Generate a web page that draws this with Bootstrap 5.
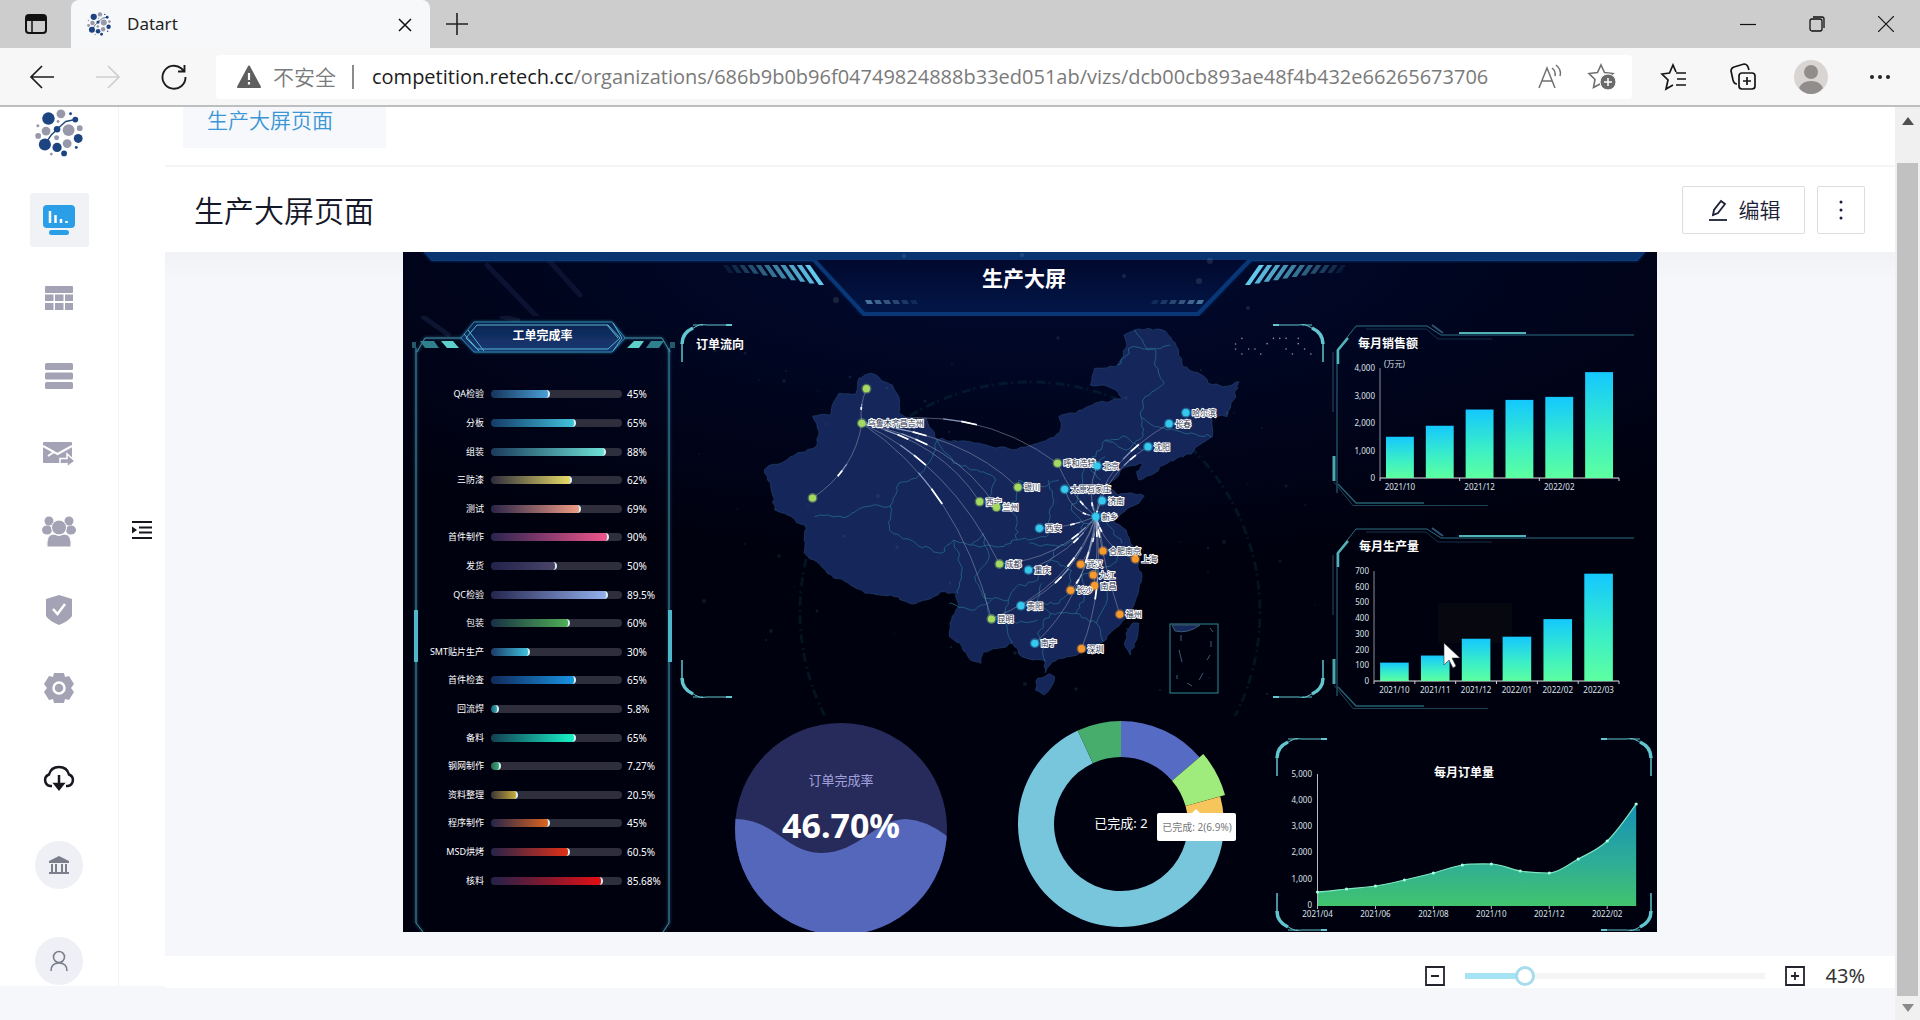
<!DOCTYPE html>
<html lang="zh-CN">
<head>
<meta charset="utf-8">
<meta name="viewport" content="width=device-width, initial-scale=1">
<title>Datart</title>
<link rel="stylesheet" href="https://cdn.jsdelivr.net/npm/bootstrap@5.3.0/dist/css/bootstrap.min.css">
<style>
  :root { --ui: "Noto Sans", "Noto Sans CJK SC", sans-serif; --ink: #1b2036; --muted-icon: #a3a3b5; --soft: #f5f7fb; }
  body { font-family: var(--ui); color: var(--ink); background: var(--soft); min-height: 100vh; overflow: hidden; }
  button { color: inherit; }
  svg { display: block; }
  .plain { border: 0; background: none; padding: 0; display: flex; align-items: center; justify-content: center; }

  /* browser chrome */
  .tab-strip { background: #cdcdcd; height: 48px; }
  .tab-menu { width: 71px; }
  .page-tab { width: 359px; background: #f7f8f9; border-radius: 8px 8px 0 0; font-size: 17px; line-height: 48px; padding: 0 14px 0 16px; color: #222; }
  .new-tab { width: 54px; }
  .win-btn { width: 69px; }
  .tool-strip { background: #f7f7f8; height: 59px; border-bottom: 2px solid #bdbebf; }
  .nav-group { width: 216px; padding: 0 29px; }
  .address { height: 44px; background: #fff; border-radius: 4px; font-size: 20px; line-height: 44px; color: #7a7a7a; padding: 0 15px 0 21px; min-width: 0; }
  .address .host { color: #1c1c1c; }
  .address .url { white-space: nowrap; overflow: hidden; flex: 1 1 auto; padding-left: 18px; font-family: "Open Sans", "Noto Sans", sans-serif; }
  .address .unsafe { font-size: 21px; font-weight: 350; padding: 0 16px 0 12px; border: 0; white-space: nowrap; }
  .address .rule { width: 2px; height: 24px; background: #8b8b8b; }
  .tools-right { width: 288px; padding: 0 6px 0 8px; }
  .tools-right .plain { flex: 1 1 0; }

  /* app shell */
  .side { width: 119px; background: #fff; border-right: 1px solid #f3f4f6; padding-top: 2px; }
  .side nav { gap: 24px; margin-top: 36px; }
  .side nav a { width: 59px; height: 54px; display: flex; align-items: center; justify-content: center; color: var(--muted-icon); border-radius: 3px; }
  .side nav a.active { background: #f0f2f6; color: #2a9ee6; }
  .side-btn { width: 48px; height: 48px; margin-top: 39px; }
  .round-btn { background: #eef0f5; border-radius: 50%; color: #7d7e8c; }
  .rail { width: 46px; background: #fff; padding-bottom: 34px; }
  .shell-left { height: 879px; }
  .doc-tabs { background: #fff; height: 60px; border-bottom: 2px solid #f4f5f7; padding-left: 18px; }
  .doc-tab { background: #f6f8fb; color: #3b96d6; height: 41px; width: 203px; padding: 0 24px; font-size: 21px; line-height: 27px; text-decoration: none; font-weight: 350; }
  .doc-head { background: #fff; height: 85px; padding: 0 30px 0 29px; }
  .doc-head h1 { font-size: 30px; line-height: 40px; margin: 0; padding-top: 2px; font-weight: 350; color: #151828; }
  .doc-head .btn { border: 1px solid #dcdde1; border-radius: 2px; background: #fff; height: 48px; font-size: 21px; line-height: 30px; color: #1b2036; font-weight: 350; }
  .edit-btn { width: 123px; }
  .more-btn { width: 48px; }
  .stage { background: linear-gradient(#f1f2f6, #f5f7fb 30px); padding-bottom: 24px; }
  .zoom-bar { background: #fff; height: 32px; padding: 8px 30px 0; font-size: 20px; line-height: 24px; }
  .zoom-bar label { width: 42px; color: #333; text-align: right; margin-left: 18px; }
  .zoom-range { appearance: none; -webkit-appearance: none; width: 300px; height: 20px; margin: 0 20px; background: linear-gradient(90deg, #a5e3f5 20%, #f4f5f5 20%) center / 100% 6px no-repeat; }
  .zoom-range::-webkit-slider-thumb { -webkit-appearance: none; width: 20px; height: 20px; border-radius: 50%; background: #fff; border: 3px solid #a5dcee; }
  .page-scroll { width: 25px; background: #f0f0f0; }
  .page-scroll .thumb { width: 21px; background: #c1c1c1; margin-bottom: 0; }
  .scroll-up { height: 56px; padding-top: 10px; }
  .scroll-down { height: 24px; }

  /* production board */
  .board { width: 100%; max-width: 1254px; background: #00000c radial-gradient(ellipse 75% 45% at 50% 0, #010a30, #00010f 100%) no-repeat; color: #fff; overflow: hidden; }
  .board svg { width: 100%; height: auto; }
  .board text { font-family: var(--ui); }
  .board-body { display: grid; grid-template-columns: 277fr 977fr; }
  .board-top { display: grid; grid-template-columns: 652fr 325fr; }
  .board-low { display: grid; grid-template-columns: 320fr 260fr 397fr; }
  .rate-panel { position: relative; padding: 0 21px 0 23px; }
  .rate-panel > svg { position: absolute; inset: 0; height: 100%; }
  .rate-panel h2 { position: relative; font-size: 12px; line-height: 40px; font-weight: 700; text-align: center; margin: 0 0 24px; }
  .rate-list { position: relative; height: 515px; font-size: 9px; line-height: 12px; margin: 0; }
  .rate-list .name { width: 58px; text-align: right; white-space: nowrap; margin-right: 7px; }
  .rate-list .progress { flex: 1 1 auto; height: 8px; border-radius: 4px; background: #2e2e3c; }
  .rate-list .progress-bar { border-radius: 4px; border-right: 2px solid #d5f3f5; }
  .rate-list .pct { width: 32px; font-size: 10px; margin-left: 5px; white-space: nowrap; }
  .t-head { font-size: 12px; font-weight: 700; fill: #fff; }
  .t-axis { font-size: 8px; fill: #dfe3ea; }
  .t-city { font-size: 8px; fill: #28304c; stroke: #fff; stroke-width: 2px; paint-order: stroke; stroke-linejoin: round; }
  .end { text-anchor: end; }
  .mid { text-anchor: middle; }
</style>
<script src="https://cdn.jsdelivr.net/npm/bootstrap@5.3.0/dist/js/bootstrap.bundle.min.js"></script>
</head>
<body class="d-flex flex-column">

<svg width="0" height="0" class="position-absolute" aria-hidden="true">
  <defs>
    <symbol id="logo" viewBox="33 108 50 50">
      <path d="M43 145 50 135 56 129 65 121 75 119" fill="none" stroke="#24477a" stroke-width="1.5"/>
      <g fill="#1c4480"><circle cx="47" cy="118" r="6.5"/><circle cx="56" cy="129" r="3.4"/><circle cx="75" cy="119" r="3"/><circle cx="78" cy="138.700" r="4.600"/><circle cx="43.300" cy="145" r="6.300"/><circle cx="56" cy="148" r="4.800"/><circle cx="63.300" cy="154.300" r="3"/><circle cx="70" cy="113" r="1.500"/><circle cx="76" cy="148" r="1.500"/></g>
      <g fill="#9798a9"><circle cx="60" cy="113" r="4.600"/><circle cx="44.500" cy="131" r="4.600"/><circle cx="68" cy="130" r="6.200"/><circle cx="79.600" cy="128" r="3"/><circle cx="36.300" cy="136" r="3"/><circle cx="55.500" cy="138" r="2.600"/><circle cx="66.500" cy="144" r="4.600"/><circle cx="36" cy="125.500" r="1.600"/><circle cx="50" cy="155" r="1.500"/><circle cx="57" cy="121" r="1.500"/></g>
    </symbol>
    <linearGradient id="barFill" x1="0" y1="0" x2="0" y2="1"><stop offset="0" stop-color="#14c8ff"/><stop offset=".6" stop-color="#3df0c4"/><stop offset="1" stop-color="#5dffa0"/></linearGradient>
    <linearGradient id="areaFill" x1="0" y1="0" x2="0" y2="1"><stop offset="0" stop-color="#1590b4"/><stop offset=".55" stop-color="#2dac98"/><stop offset="1" stop-color="#42c46e"/></linearGradient>
    <linearGradient id="hexFill" x1="0" y1="0" x2="0" y2="1"><stop offset="0" stop-color="#0e2350"/><stop offset="1" stop-color="#153a75"/></linearGradient>
    <filter id="glow" x="-10%" y="-10%" width="120%" height="120%"><feGaussianBlur stdDeviation="1.500" result="b"/><feMerge><feMergeNode in="b"/><feMergeNode in="SourceGraphic"/></feMerge></filter>
    <g id="angleFrame" fill="none" stroke-linejoin="round">
      <path d="M1337 493V350L1356 326H1427L1441 335H1634" stroke="#2a7183" stroke-width="1"/>
      <path d="M1366 329H1426L1438 339H1492" stroke="#16304a" stroke-width="1"/>
      <path d="M1432 325 1443 333" stroke="#2c5573" stroke-width="2"/>
      <path d="M1338 364V350L1348 338" stroke="#52b3b8" stroke-width="2.500"/>
      <path d="M1459 333H1526" stroke="#4fb3b8" stroke-width="2"/>
      <path d="M1333 352V412" stroke="#34485f" stroke-width="1"/>
      <path d="M1334 456V481" stroke="#4ba9ae" stroke-width="3"/>
      <path d="M1334 482 1353 505.500H1488" stroke="#1e4158" stroke-width="1"/>
      <path d="M1338 484 1356 503H1424" stroke="#23606f" stroke-width="1.500"/>
    </g>
    <g id="cornerMark" fill="none" stroke="#62c5cf">
      <path d="M1 38V18" stroke-width="1.500"/><path d="M1 20Q1 9 12 4" stroke-width="3.500"/>
      <path d="M8 7 14 3Q19-1 26 1H50M12 1h10" stroke-width="1"/>
      <path d="M45 1h6" stroke-width="2"/>
    </g>
  </defs>
</svg>

<header>
  <div class="tab-strip d-flex align-items-stretch">
    <button class="plain tab-menu" aria-label="标签操作菜单"><svg width="22" height="22" viewBox="0 0 22 22"><rect x="1" y="2" width="20" height="18" rx="3" fill="none" stroke="#111" stroke-width="2"/><path d="M1 3h20v5H1z" fill="#111"/><path d="M7 8v12" stroke="#111" stroke-width="1.500"/></svg></button>
    <div class="page-tab d-flex align-items-center">
      <svg width="24" height="24"><use href="#logo"/></svg><span class="ps-3 flex-fill">Datart</span>
      <button class="plain" aria-label="关闭标签"><svg width="22" height="22" viewBox="0 0 22 22"><path d="M5 6 17 18M17 6 5 18" stroke="#111" stroke-width="1.500"/></svg></button>
    </div>
    <button class="plain new-tab" aria-label="新建标签"><svg width="22" height="22" viewBox="0 0 22 22"><path d="M0 11h22M11 0v22" stroke="#222" stroke-width="1.600"/></svg></button>
    <div class="ms-auto d-flex">
      <button class="plain win-btn" aria-label="最小化"><svg width="16" height="16"><path d="M0 8.500h16" stroke="#111" stroke-width="1.200"/></svg></button>
      <button class="plain win-btn" aria-label="还原"><svg width="16" height="16" fill="none" stroke="#111" stroke-width="1.300"><rect x="1" y="3" width="12" height="12" rx="2"/><path d="M4 1h9q2 0 2 2v9"/></svg></button>
      <button class="plain win-btn" aria-label="关闭"><svg width="16" height="16"><path d="M0 0 16 16M16 0 0 16" stroke="#111" stroke-width="1.200"/></svg></button>
    </div>
  </div>
  <div class="tool-strip d-flex align-items-center">
    <div class="nav-group d-flex justify-content-between flex-shrink-0">
      <button class="plain" aria-label="后退"><svg width="26" height="26" viewBox="0 0 26 26" fill="none" stroke="#1d1d1d" stroke-width="1.700"><path d="M25 13H2M13 2 2 13 13 24"/></svg></button>
      <button class="plain" aria-label="前进"><svg width="26" height="26" viewBox="0 0 26 26" fill="none" stroke="#cfcfd2" stroke-width="1.700"><path d="M1 13h23M13 2 24 13 13 24"/></svg></button>
      <button class="plain" aria-label="刷新"><svg width="26" height="26" viewBox="0 0 26 26" fill="none" stroke="#1d1d1d" stroke-width="1.900"><path d="M24.500 13A11.500 11.500 0 1 1 20.500 4.500L23 7M23.500 1v6.500H17"/></svg></button>
    </div>
    <div class="address d-flex align-items-center flex-fill">
      <svg width="24" height="24" viewBox="0 0 24 24"><path d="M12 1.500 23 22H1z" fill="#5f5f5f" stroke="#5f5f5f" stroke-width="2" stroke-linejoin="round"/><path d="M12 8v7M12 17v2.500" stroke="#fff" stroke-width="2.200"/></svg>
      <span class="unsafe">不安全</span><span class="rule"></span>
      <span class="url"><span class="host">competition.retech.cc</span>/organizations/686b9b0b96f04749824888b33ed051ab/vizs/dcb00cb893ae48f4b432e66265673706</span>
      <button class="plain me-4" aria-label="朗读"><svg width="26" height="26" viewBox="0 0 26 26" fill="none" stroke="#707070" stroke-width="1.500"><path d="M2 24 10 4 18 24M5 17h10M15 4q4 3 3 8M19 1q6 5 4 11"/></svg></button>
      <button class="plain" aria-label="收藏"><svg width="30" height="30" viewBox="0 0 30 30"><path d="M14 3l3.500 7.500 8.500 1-6 6 1.500 8-7.500-4-7.500 4 1.500-8-6-6 8.500-1z" fill="none" stroke="#707070" stroke-width="1.600"/><circle cx="21" cy="20" r="8" fill="#6a6a6a" stroke="#fff"/><path d="M21 16v8M17 20h8" stroke="#fff" stroke-width="1.500"/></svg></button>
    </div>
    <div class="tools-right d-flex flex-shrink-0">
      <button class="plain" aria-label="收藏夹"><svg width="28" height="28" viewBox="0 0 28 28" fill="none" stroke="#161616" stroke-width="1.700"><path d="M16 9 13 2 9.500 10 2 11l6 6-2 9 7-4M16 10h10M17 16h9M16 22h10"/></svg></button>
      <button class="plain" aria-label="集锦"><svg width="28" height="28" viewBox="0 0 28 28" fill="none" stroke="#161616" stroke-width="1.700"><rect x="10" y="10" width="16" height="16" rx="3"/><path d="M18 14v8M14 18h8M8 21q-3 0-4-4L2 8q0-3 3-4l10-3q3 0 4 3l1 3"/></svg></button>
      <button class="plain" aria-label="用户"><svg width="34" height="34" viewBox="0 0 34 34"><circle cx="17" cy="17" r="17" fill="#d8d5d3"/><circle cx="17" cy="12" r="7" fill="#918d8c"/><path d="M5 28q3-7 12-7t12 7q-5 6-12 6T5 28" fill="#918d8c"/></svg></button>
      <button class="plain" aria-label="更多工具"><svg width="22" height="22" fill="#222"><circle cx="3" cy="11" r="2"/><circle cx="11" cy="11" r="2"/><circle cx="19" cy="11" r="2"/></svg></button>
    </div>
  </div>
</header>

<div class="d-flex flex-fill">
  <div class="shell-left d-flex flex-shrink-0">
    <aside class="side d-flex flex-column align-items-center">
      <svg width="48" height="48"><use href="#logo"/></svg>
      <nav class="d-flex flex-column">
        <a class="active" href="#viz" aria-label="可视化"><svg width="32" height="32" viewBox="0 0 32 32"><rect x="0" y="1" width="32" height="23" rx="4" fill="currentColor"/><rect x="6" y="26" width="20" height="5" rx="2.500" fill="currentColor"/><path d="M7 7v12M12.500 11v8M18 15v4M23.500 17v2" stroke="#fff" stroke-width="2.500"/></svg></a>
        <a href="#views" aria-label="数据视图"><svg width="28" height="26" viewBox="0 0 28 26" fill="currentColor"><rect y="1" width="28" height="7" rx="1"/><path d="M0 9.500h8.500v6.500H0zM10 9.500h8.500v6.500H10zM20 9.500h8v6.500h-8zM0 18h8.500v7H0zM10 18h8.500v7H10zM20 18h8v7h-8z"/></svg></a>
        <a href="#sources" aria-label="数据源"><svg width="28" height="28" viewBox="0 0 28 28" fill="currentColor"><rect y="1" width="28" height="7" rx="1.500"/><rect y="10.500" width="28" height="7" rx="1.500"/><rect y="20" width="28" height="7" rx="1.500"/></svg></a>
        <a href="#schedules" aria-label="定时任务"><svg width="32" height="26" viewBox="0 0 32 26"><rect x="0" y="1" width="29" height="21" rx="1" fill="currentColor"/><path d="M0 5 14.500 13 29 5M5 15 11 11" fill="none" stroke="#fff" stroke-width="2"/><path d="M17 23v-5.500h7V13l8 7-8 6v-3.500z" fill="currentColor" stroke="#fff" stroke-width="1.500"/></svg></a>
        <a href="#members" aria-label="成员与角色"><svg width="34" height="32" viewBox="0 0 34 32" fill="currentColor"><circle cx="7" cy="5" r="4.500"/><circle cx="27" cy="5" r="4.500"/><ellipse cx="5" cy="14" rx="5" ry="4.500"/><ellipse cx="29" cy="14" rx="5" ry="4.500"/><circle cx="17" cy="11.500" r="7.500" stroke="#fff"/><path d="M5 31q-1-13 7-13 5 3 10 0 8 0 7 13z" stroke="#fff"/></svg></a>
        <a href="#permissions" aria-label="权限"><svg width="26" height="32" viewBox="0 0 26 32"><path d="M13 1 26 5v17q-3 5-13 9Q3 27 0 22V5z" fill="currentColor"/><path d="M7 15 11.500 20 19 10" fill="none" stroke="#fff" stroke-width="2.500"/></svg></a>
        <a href="#settings" aria-label="设置"><svg width="30" height="32" viewBox="0 0 30 32"><path d="M10 1h10l1 4 4-1 5 8-3 4 3 4-5 8-4-1-1 4H10l-1-4-4 1-5-8 3-4-3-4 5-8 4 1z" fill="currentColor" stroke-linejoin="round"/><circle cx="15" cy="16" r="5.500" fill="currentColor" stroke="#fff" stroke-width="2.500"/></svg></a>
      </nav>
      <button class="plain side-btn" aria-label="下载"><svg width="32" height="26" viewBox="0 0 32 26" fill="none" stroke="#16171f" stroke-width="2.500"><path d="M9 21H7A6 6 0 0 1 6 9.500Q8 2 16 2T26 9.500A6 6 0 0 1 25 21H23M16 10v12M12 19l4 5 4-5z"/></svg></button>
      <button class="plain side-btn round-btn" aria-label="组织"><svg width="20" height="20" viewBox="0 0 20 20" fill="currentColor"><path d="M10 1 20 6v2H0V6zM2 9h2v8H2zM6 9h2v8H6zM12 9h2v8h-2zM16 9h2v8h-2zM0 17h20v2H0z"/></svg></button>
      <button class="plain side-btn round-btn mt-5" aria-label="个人"><svg width="20" height="22" viewBox="0 0 20 22" fill="none" stroke="currentColor" stroke-width="1.600"><circle cx="10" cy="7" r="5.500"/><path d="M2 21q0-8 8-8t8 8"/></svg></button>
    </aside>
    <div class="rail d-flex justify-content-center align-items-center">
      <button class="plain" aria-label="展开目录"><svg width="20" height="20" viewBox="0 0 20 20"><path d="M0 2h20M7 7.500h13M7 12.500h13M0 18h20" stroke="#16171f" stroke-width="1.800"/><path d="M0 6.500 5 10 0 13.500z" fill="#16171f"/></svg></button>
    </div>
  </div>

  <main class="flex-fill">
    <div class="doc-tabs"><a class="doc-tab d-block" href="#board">生产大屏页面</a></div>
    <div class="doc-head d-flex align-items-center">
      <h1 class="me-auto">生产大屏页面</h1>
      <button class="btn edit-btn d-flex align-items-center justify-content-center p-0 me-2"><svg class="me-2" width="24" height="24" viewBox="0 0 24 24" fill="none" stroke="#1b2036" stroke-width="1.800"><path d="M2 22h18"/><path d="M6 17 7 12 14 3 18 6 11 15z"/></svg>编辑</button>
      <button class="btn more-btn d-flex align-items-center justify-content-center p-0 ms-1" aria-label="更多"><svg width="4" height="20" fill="#1b2036"><circle cx="2" cy="2" r="1.500"/><circle cx="2" cy="10" r="1.500"/><circle cx="2" cy="18" r="1.500"/></svg></button>
    </div>

    <div class="stage">
      <section class="board mx-auto" id="board">
        <svg viewBox="403 252 1254 64" role="img" aria-label="生产大屏">
          <defs><linearGradient id="titleFill" x1="0" y1="0" x2="0" y2="1"><stop offset="0" stop-color="#01082c"/><stop offset="1" stop-color="#021748"/></linearGradient></defs>
          <g stroke="#0c1332" stroke-width="5"><path d="M487 265 540 320M545 256 580 295" stroke-linecap="round"/></g>
          <path d="M817 258 865 314H1198L1250 258z" fill="url(#titleFill)"/>
          <path d="M425 252H1644L1637 260H1251L1198 315H864L814 260H432z" fill="none" stroke="#0a3a7c" stroke-width="2" filter="url(#glow)"/>
          <path d="M425 252H1644L1637 260H432z" fill="#0a3470"/>
          <path d="M814 260 864 314H1198L1250 260" fill="none" stroke="#083878" stroke-width="4"/>
          <g id="titleStripes"></g>
          <g fill="#fff" opacity=".1"><circle cx="904" cy="256" r="2"/><circle cx="1022" cy="255" r="2"/><circle cx="1210" cy="261" r="3"/><circle cx="1124" cy="276" r="2"/><circle cx="1199" cy="281" r="3"/><circle cx="836" cy="300" r="3"/><circle cx="1248" cy="308" r="2"/></g>
          <text x="1024" y="286" class="mid" font-size="21" font-weight="700" fill="#fff">生产大屏</text>
        </svg>

        <div class="board-body">
          <div class="rate-panel">
            <svg viewBox="403 316 277 616" preserveAspectRatio="none" aria-hidden="true">
              <path d="M422 316 450 336M500 316 520 321" stroke="#0e1530" stroke-width="5"/>
              <g fill="none" stroke="#1d6d92" filter="url(#glow)"><path d="M417 352 425 338H462M624 338H662L670 352M416 348V923L423 932M669 348V923L663 932" stroke="#3f8fa9"/></g>
              <path d="M416 610V662M670 610V662" stroke="#4fb7cb" stroke-width="4"/>
              <path d="M461 338 474 322H612L625 338 612 352H474z" fill="url(#hexFill)" stroke="#2b86a8" filter="url(#glow)"/>
              <path d="M466 338 477 325H608L620 338 608 349H477zM464 334 479 351M468 330 484 351M613 323 622 338 613 351M607 325 618 338" fill="none" stroke="#56b4cc"/>
              <path d="M441 341h12l6 7h-12zM634 341h10l-5 7h-12z" fill="#5cd0c9"/>
              <path d="M420 341h14l5 7h-14zM651 341h13l-5 7h-13z" fill="#2f7f8c"/><path d="M412 342h4v6h-4zM670 342h5v6h-5z" fill="#225a6c"/>
            </svg>
            <h2>工单完成率</h2>
            <div class="rate-list d-flex flex-column" id="rateList"></div>
          </div>

          <div>
            <div class="board-top">
              <svg viewBox="680 316 652 400" role="img" aria-label="订单流向" id="flowMap">
                <ellipse cx="1030" cy="612" rx="230" ry="230" fill="none" stroke="#0c4a55" stroke-width="3" stroke-dasharray="2 5 9 3" opacity=".25"/>
                <g id="mapShapes"></g><g id="mapStars"></g>
                <rect x="1170" y="624" width="48" height="69" fill="none" stroke="#2f8a92"/>
                <path d="M1172 625h28q-12 9-25 6zM1181 635v6M1179 650l3 12M1177 675v4M1210 628l3 4M1211 641v6M1207 660l3-5M1199 680l4-7M1187 683l5 3" fill="#17295c" stroke="#3c5a72"/>
                <g id="mapFlows"></g><g id="mapNodes"></g>
                <use href="#cornerMark" transform="translate(681 324)"/><use href="#cornerMark" transform="translate(1324 324) scale(-1 1)"/>
                <use href="#cornerMark" transform="translate(681 698) scale(1 -1)"/><use href="#cornerMark" transform="translate(1324 698) scale(-1 -1)"/>
                <text x="696" y="349" class="t-head">订单流向</text>
              </svg>
              <div>
                <svg viewBox="1332 316 325 200" role="img" aria-label="每月销售额"><use href="#angleFrame"/><text x="1358" y="348" class="t-head">每月销售额</text><g id="salesChart"></g><text x="1384" y="367" class="t-axis">(万元)</text></svg>
                <svg viewBox="1332 516 325 200" role="img" aria-label="每月生产量"><use href="#angleFrame" y="203"/><text x="1359" y="551" class="t-head">每月生产量</text><rect x="1438" y="603" width="74" height="40" fill="#07070f"/><g id="outputChart"></g><path d="M1444 643v22l5-5 4 8 3-2-4-8h8z" fill="#fff" stroke="#333" stroke-width=".6"/></svg>
              </div>
            </div>
            <div class="board-low">
              <svg viewBox="680 716 320 216" role="img" aria-label="订单完成率 46.70%">
                <defs><clipPath id="ballClip"><circle cx="841" cy="829" r="106"/></clipPath></defs>
                <circle cx="841" cy="829" r="106" fill="#272b5b"/>
                <path clip-path="url(#ballClip)" d="M735 819C775 819 786 853 822 853S876 819 906 819Q926 820 947 836V936H735z" fill="#5467bb"/>
                <text x="841" y="785" class="mid" font-size="13" fill="#a3a1dd">订单完成率</text>
                <text x="841" y="838" class="mid" font-size="34" font-weight="700" fill="#fff">46.70%</text>
              </svg>
              <svg viewBox="1000 716 260 216" role="img" aria-label="订单状态">
                <g id="donut"></g>
                <text x="1121" y="828" class="mid" font-size="13" fill="#fff">已完成: 2</text>
                <path d="M1192 813 1196 809 1200 813z" fill="#fff"/><rect x="1157" y="813" width="79" height="28" rx="2" fill="#fff"/>
                <text x="1197" y="831" class="mid" font-size="10" fill="#777">已完成: 2(6.9%)</text>
              </svg>
              <svg viewBox="1260 716 397 216" role="img" aria-label="每月订单量">
                <use href="#cornerMark" transform="translate(1276 738)"/><use href="#cornerMark" transform="translate(1652 738) scale(-1 1)"/>
                <use href="#cornerMark" transform="translate(1276 931) scale(1 -1)"/><use href="#cornerMark" transform="translate(1652 931) scale(-1 -1)"/>
                <text x="1464" y="777" class="t-head mid">每月订单量</text><g id="orderChart"></g>
              </svg>
            </div>
          </div>
        </div>
      </section>
    </div>

    <div class="zoom-bar d-flex align-items-center justify-content-end">
      <button class="plain" aria-label="缩小"><svg width="20" height="20" fill="none" stroke="#22232c" stroke-width="1.800"><path d="M1 1h18v18H1zM6 10h8"/></svg></button>
      <input class="zoom-range" id="zoom" type="range" min="25" max="125" value="43">
      <button class="plain" aria-label="放大"><svg width="20" height="20" fill="none" stroke="#22232c" stroke-width="1.800"><path d="M1 1h18v18H1zM6 10h8M10 6v8"/></svg></button>
      <label for="zoom">43%</label>
    </div>
  </main>

  <div class="page-scroll d-flex flex-column align-items-center flex-shrink-0">
    <div class="scroll-up"><svg width="12" height="8"><path d="M6 0 12 8H0z" fill="#505050"/></svg></div>
    <div class="thumb flex-fill"></div>
    <div class="scroll-down d-flex align-items-center"><svg width="12" height="8"><path d="M0 0h12L6 8z" fill="#8a8a8a"/></svg></div>
  </div>
</div>

<script>
const byId = id => document.getElementById(id);

// completion rate per work step: name, percent, start and end colour
const rates = [
  ['QA检验', 45, '#14345a', '#4a9fd6'], ['分板', 65, '#143a68', '#41c2dc'], ['组装', 88, '#1a3a5c', '#6de0d4'],
  ['三防漆', 62, '#2c2c3c', '#e6d967'], ['测试', 69, '#2a2448', '#ef9a84'], ['首件制作', 90, '#2a2450', '#f0558c'],
  ['发货', 50, '#22224c', '#4a4468'], ['QC检验', 89.5, '#24264e', '#94b0ee'], ['包装', 60, '#183044', '#4fae57'],
  ['SMT贴片生产', 30, '#1c3a68', '#3fc0dc'], ['首件检查', 65, '#102a5a', '#1993e2'], ['回流焊', 5.8, '#1d6670', '#35a8b4'],
  ['备料', 65, '#123f50', '#17f2c8'], ['钢网制作', 7.27, '#246650', '#3fae7c'], ['资料整理', 20.5, '#3a3438', '#c8ac3c'],
  ['程序制作', 45, '#24244a', '#dc6420'], ['MSD烘烤', 60.5, '#24244a', '#e03016'], ['核料', 85.68, '#22224a', '#e20e14']
];
byId('rateList').innerHTML = rates.map(([n, v, a, b]) =>
  `<div class="d-flex align-items-center flex-fill"><span class="name">${n}</span><div class="progress" role="progressbar" aria-label="${n}" aria-valuenow="${v}" aria-valuemin="0" aria-valuemax="100"><div class="progress-bar" style="width:${v}%;background:linear-gradient(90deg,${a},${b})"></div></div><span class="pct">${v}%</span></div>`).join('');

// title decoration
let deco = '';
for (let i = 0; i < 11; i++) {
  const o = 1 - i * .09, h = Math.max(8, 20 - i * 1.6), x = 805 - i * 8.200, m = 1262 + i * 8.200;
  deco += `<path d="M${x} 265h5l${h * .7} ${h}h-5z" fill="#62c8ec" opacity="${o}"/><path d="M${m} 265h-5l${-h * .7} ${h}h5z" transform="translate(2 0)" fill="#62c8ec" opacity="${o}"/>`;
}
for (let i = 0; i < 6; i++) {
  const o = .65 - i * .1;
  deco += `<path d="M${865 + i * 9} 300h6l2 4h-6z" fill="#6fa5c8" opacity="${o}"/><path d="M${1204 - i * 9} 300h-6l-2 4h6z" fill="#6fa5c8" opacity="${o}"/>`;
}
byId('titleStripes').innerHTML = deco;

// map: digitised points on a 2.376 x 3 grid with origin 680,250
const px = x => 680 + x / 2.376, py = y => 250 + y / 3;
let seed = 7;
const rnd = () => (seed = seed * 16807 % 2147483647) / 2147483647;
function outline(str, closed, rough) {
  const p = str.split(' ').map(s => s.split(',').map(Number)).map(([x, y]) => [px(x), py(y)]);
  if (closed) p.push(p[0]);
  let d = 'M' + p[0];
  for (let i = 1; i < p.length; i++) {
    const [ax, ay] = p[i - 1], [bx, by] = p[i];
    const n = Math.max(1, Math.round(Math.hypot(bx - ax, by - ay) / 4));
    for (let k = 1; k <= n; k++) {
      const j = k < n ? rough : 0;
      d += 'L' + (ax + (bx - ax) * k / n + (rnd() - .5) * j).toFixed(1) + ' ' + (ay + (by - ay) * k / n + (rnd() - .5) * j).toFixed(1);
    }
  }
  return d + (closed ? 'z' : '');
}
const land = [
  '200,660 210,648 240,640 262,620 322,590 330,545 315,498 358,495 362,465 378,430 418,432 425,385 452,370 475,385 505,405 520,440 520,490 555,505 585,505 600,540 612,568 690,575 740,590 800,598 850,580 890,562 905,535 900,500 940,490 985,460 1052,445 1035,420 1000,405 975,405 985,355 1040,345 1062,285 1055,255 1080,240 1115,235 1155,245 1180,290 1195,350 1240,375 1255,400 1290,410 1328,395 1315,450 1300,500 1262,495 1265,560 1240,580 1215,612 1180,625 1150,645 1120,675 1090,690 1085,665 1100,640 1060,650 1030,690 1015,705 1040,735 1070,728 1103,738 1090,760 1050,790 1030,815 1060,840 1070,880 1085,910 1088,950 1098,980 1090,1020 1080,1060 1060,1100 1030,1140 1005,1175 960,1205 920,1220 885,1235 868,1268 868,1235 840,1230 812,1220 790,1180 755,1195 720,1205 715,1240 690,1230 670,1190 640,1160 645,1110 662,1070 655,1030 620,1025 585,1050 550,1062 500,1035 440,1030 400,1000 350,970 325,935 295,910 295,870 300,835 265,800 225,780 220,735 215,700',
  '875,1272 890,1280 880,1315 865,1335 845,1320 850,1285', '1075,1120 1090,1120 1085,1170 1070,1215 1058,1190 1060,1150'];
const borders = ['320,800 400,798 440,770 500,768 520,700 560,685 600,620 612,568', '500,768 498,840 560,880 620,910 650,870 690,885 720,850', '612,570 650,640 720,665 750,690 735,740 770,770 800,750 805,690 860,710 900,690', '650,870 670,960 660,1030', '690,885 760,890 800,870 800,800 770,770', '720,850 735,920 700,980 720,1040 780,1050 800,1010', '800,870 870,860 880,800 885,740 875,690', '830,880 900,890 940,870 960,820 930,780 950,720', '800,1010 850,990 880,930 900,890', '780,1050 770,1110 790,1180', '860,1000 850,1060 880,1090 850,1150 868,1235', '880,930 930,960 925,1030 900,1060 860,1060', '940,1090 960,1040 955,980 985,960 1020,990', '880,1090 940,1090 990,1120 1005,1175', '1020,990 1015,1050 990,1120', '985,960 1030,940 1050,900 1088,910', '960,820 1010,810 1050,880', '950,720 960,650 1000,600 1010,570 1060,600', '1000,690 975,650 1010,620', '1040,345 1075,290 1130,300 1130,350 1150,400 1105,440 1095,500 1130,530 1190,545 1262,560', '1080,240 1110,300 1165,285', '1060,600 1100,560 1095,500', '1010,570 1060,560 1100,600', '980,760 1000,800 1040,790', '640,1060 700,1080 740,1050', '725,1030 735,1100 800,1120 850,1110'];
byId('mapShapes').innerHTML = land.map(s => `<path d="${outline(s, true, 2.6)}" fill="#15265a" stroke="#23406d" stroke-width=".7"/>`).join('') +
  borders.map(s => `<path d="${outline(s, false, 3.4)}" fill="none" stroke="#236a8a" stroke-width=".8"/>`).join('');
let stars = '';
for (let i = 0; i < 60; i++) stars += `<circle cx="${(690 + rnd() * 630).toFixed(0)}" cy="${(320 + rnd() * 385).toFixed(0)}" r="${(.6 + rnd() * 1.4).toFixed(1)}" fill="#4c8290" opacity=".18"/>`;
[[1320, 282], [1335, 265], [1320, 297], [1335, 312], [1351, 297], [1366, 297], [1380, 312], [1395, 281], [1410, 265], [1425, 265], [1440, 265], [1440, 297], [1455, 312], [1469, 265], [1469, 281], [1484, 297], [1499, 312]].forEach(([x, y]) => stars += `<circle cx="${px(x)}" cy="${py(y)}" r=".8" fill="#8c95a5"/>`);
byId('mapStars').innerHTML = stars;

const U = [432, 520], X = [988, 800];
const flows = [
  [U, [700, 455], [897, 640], .55], [U, [670, 550], [803, 712], .35], [U, [620, 575], [712, 755], .32], [U, [650, 570], [752, 772], .4],
  [U, [640, 640], [759, 942], .4], [U, [660, 710], [740, 1107], .5], [[443, 416], [425, 470], U, .6], [U, [415, 660], [315, 744], .65],
  [X, [1000, 640], [1162, 521], .75], [X, [1010, 670], [1112, 590], .85], [X, [930, 740], [897, 640], .35], [X, [930, 790], [914, 718], .3], [X, [965, 730], [990, 650], .3],
  [X, [990, 780], [1003, 752], .4], [X, [920, 835], [854, 835], .45], [X, [900, 930], [759, 942], .3], [X, [930, 910], [828, 960], .4], [X, [940, 990], [810, 1067], .65], [X, [930, 1010], [740, 1107], .4],
  [X, [960, 1050], [843, 1180], .3], [X, [1010, 1020], [954, 1196], .6], [X, [1000, 840], [1005, 903], .3], [X, [1010, 900], [1082, 927], .25], [X, [990, 880], [952, 943], .5], [X, [975, 960], [928, 1021], .85], [X, [995, 900], [984, 1007], .3], [X, [1010, 960], [1045, 1093], .2]];
const along = (a, c, b, t) => [0, 1].map(i => (1 - t) ** 2 * a[i] + 2 * t * (1 - t) * c[i] + t * t * b[i]);
byId('mapFlows').innerHTML = flows.map(([a, c, b, t]) => {
  const q = [t - .17, t - .08, t].map(v => along(a, c, b, v)).map(([x, y]) => px(x) + ' ' + py(y));
  return `<path d="M${px(a[0])} ${py(a[1])}Q${px(c[0])} ${py(c[1])} ${px(b[0])} ${py(b[1])}" fill="none" stroke="#9ba5ba" stroke-opacity=".55" stroke-width=".9"/><path d="M${q.join('L')}" fill="none" stroke="#b8c8ee" stroke-opacity=".6" stroke-width="1.300"/><path d="M${q[1]}L${q[2]}" stroke="#fff" stroke-width="1.700"/>`;
}).join('');
const G = '#a4da61', B = '#35c9ee', O = '#f79a2d';
const cities = [[443, 416, G, ''], [432, 520, G, '乌鲁木齐昌吉州'], [315, 744, G, ''], [897, 640, G, '呼和浩特'], [803, 712, G, '银川'], [712, 755, G, '西宁'], [752, 772, G, '兰州'], [759, 942, G, '成都'], [740, 1107, G, '昆明'],
  [1202, 488, B, '哈尔滨'], [1162, 521, B, '长春'], [1112, 590, B, '沈阳'], [991, 648, B, '北京'], [914, 718, B, '太原石家庄'], [1003, 752, B, '济南'], [988, 800, B, '新乡'], [854, 835, B, '西安'], [828, 960, B, '重庆'], [810, 1067, B, '贵阳'], [843, 1180, B, '南宁'],
  [1005, 903, O, '合肥南京'], [1082, 927, O, '上海'], [952, 943, O, '武汉'], [982, 975, O, '九江'], [985, 1007, O, '南昌'], [928, 1021, O, '长沙'], [1045, 1093, O, '福州'], [954, 1196, O, '深圳']];
byId('mapNodes').innerHTML = cities.map(([x, y, c, n]) =>
  `<circle cx="${px(x)}" cy="${py(y)}" r="5" fill="${c}" opacity=".4"/><circle cx="${px(x)}" cy="${py(y)}" r="3.600" fill="${c}"/><text x="${px(x) + 6}" y="${py(y) + 3}" class="t-city">${n}</text>`).join('');

// bar charts
function barChart(id, o) {
  let s = `<path d="M${o.x0} ${o.top}V${o.base}" stroke="#8b8d9c"/><path d="M${o.x0} ${o.base}H${o.x1}" stroke="#e4e6ea" stroke-width="1.200"/>`;
  for (let i = 0; i <= o.ticks; i++) { const x = o.x0 + (o.x1 - o.x0) * i / o.ticks; s += `<path d="M${x} ${o.base}v3" stroke="#cfd2d8"/>`; }
  for (let v = 0; v <= o.max; v += o.step) s += `<text x="${o.x0 - 5}" y="${o.base - (o.base - o.top) * v / o.max + 3}" class="t-axis end">${v.toLocaleString('en-US')}</text>`;
  const w = (o.x1 - o.x0) / o.data.length;
  o.data.forEach((v, i) => { const h = (o.base - o.top) * v / o.max; s += `<rect x="${o.x0 + w * i + w * .15}" y="${o.base - h}" width="${w * .7}" height="${h}" fill="url(#barFill)"/>`; });
  o.labels.forEach(([i, t]) => s += `<text x="${o.x0 + w * (i + .5)}" y="${o.base + 12}" class="t-axis mid">${t}</text>`);
  byId(id).innerHTML = s;
}
barChart('salesChart', { x0: 1380, x1: 1619, top: 368, base: 478, ticks: 3, max: 4000, step: 1000, data: [1500, 1900, 2490, 2840, 2950, 3850], labels: [[0, '2021/10'], [2, '2021/12'], [4, '2022/02']] });
barChart('outputChart', { x0: 1374, x1: 1619, top: 571, base: 681, ticks: 6, max: 700, step: 100, data: [117, 162, 269, 282, 394, 683], labels: ['2021/10', '2021/11', '2021/12', '2022/01', '2022/02', '2022/03'].map((t, i) => [i, t]) });

// monthly orders
(() => {
  const y = [892, 889, 886, 880, 873, 865, 864, 871, 873, 859, 841, 804], x = i => 1317.5 + i * 28.970, base = 906;
  const slope = y.map((v, i) => i === 0 || i === 11 ? 0 : (v - y[i - 1]) * (y[i + 1] - v) <= 0 ? 0 : (y[i + 1] - y[i - 1]) / 2);
  slope[0] = -2; slope[11] = -42;
  let d = `M${x(0)} ${y[0]}`;
  for (let i = 1; i < 12; i++) d += `C${x(i - 1) + 9.7} ${y[i - 1] + slope[i - 1] / 3} ${x(i) - 9.7} ${y[i] - slope[i] / 3} ${x(i)} ${y[i]}`;
  let s = `<path d="${d}V${base}H${x(0)}z" fill="url(#areaFill)"/><path d="${d}" fill="none" stroke="#7de8c0" stroke-width="1.200"/><path d="M${x(0)} 774V${base + 3}" stroke="#b9bcc6"/>`;
  y.forEach((v, i) => s += `<circle cx="${x(i)}" cy="${v}" r="1.600" fill="#a4ffdf"/>`);
  for (let i = 0; i < 6; i++) s += `<text x="1312" y="${base + 2 - i * 26.300}" class="t-axis end">${(i * 1000).toLocaleString('en-US')}</text><path d="M${x(i * 2)} ${base}v3" stroke="#b9bcc6"/><text x="${x(i * 2)}" y="917" class="t-axis mid">${['2021/04', '2021/06', '2021/08', '2021/10', '2021/12', '2022/02'][i]}</text>`;
  byId('orderChart').innerHTML = s;
})();

// order status ring: share and outer radius
(() => {
  const parts = [[4, '#566bc3', 103], [2, '#9fec7d', 108], [2, '#f6c65c', 103], [19, '#78c6dc', 103], [2, '#46ad6d', 103]];
  let a = 0, s = '';
  const pt = (r, t) => `${(1121 + r * Math.sin(t)).toFixed(2)} ${(824 - r * Math.cos(t)).toFixed(2)}`;
  parts.forEach(([n, c, R]) => {
    const b = a + n / 29 * Math.PI * 2, big = n > 14 ? 1 : 0;
    s += `<path d="M${pt(R, a)}A${R} ${R} 0 ${big} 1 ${pt(R, b)}L${pt(67, b)}A67 67 0 ${big} 0 ${pt(67, a)}z" fill="${c}"/>`;
    a = b;
  });
  byId('donut').innerHTML = s;
})();
</script>
</body>
</html>
